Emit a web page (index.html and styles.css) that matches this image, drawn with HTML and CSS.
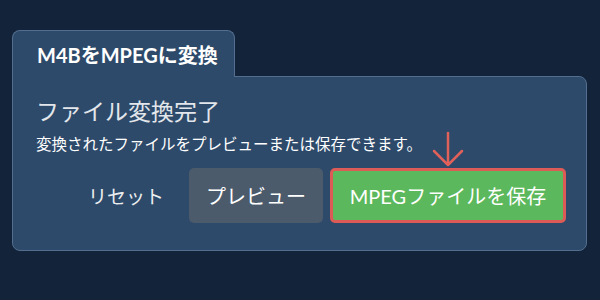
FILE: index.html
```html
<!DOCTYPE html>
<html lang="ja">

<head>
  <meta charset="UTF-8">
  <meta name="viewport" content="width=device-width, initial-scale=1.0">
  <title>M4BをMPEGに変換</title>
  <link rel="stylesheet" href="styles.css">
</head>

<body>
  <div class="widget">
    <div class="tab">M4BをMPEGに変換</div>
    <div class="panel">
      <h2 class="title">ファイル変換完了</h2>
      <p class="desc">変換されたファイルをプレビューまたは保存できます。</p>
      <div class="actions">
        <button class="btn btn-reset">リセット</button>
        <button class="btn btn-preview">プレビュー</button>
        <div class="save-wrap">
          <svg class="arrow" width="32" height="36" viewBox="0 0 32 36">
            <path d="M16 2 V34 M2 20 L16 34 L30 20" fill="none" stroke="#e0605a" stroke-width="2.5" stroke-linecap="round" stroke-linejoin="round"/>
          </svg>
          <button class="btn btn-save">MPEGファイルを保存</button>
        </div>
      </div>
    </div>
  </div>
</body>

</html>
```

FILE: styles.css
```css
body {
  margin: 0;
  background-color: #12233a;
  font-family: Lato, "Noto Sans CJK JP", sans-serif;
  color: #fff;
}

.widget {
  padding: 30px 13px 0 12px;
}

.tab {
  display: inline-block;
  width: 223px;
  box-sizing: border-box;
  height: 47px;
  padding: 9px 0 0 24px;
  background-color: #2d4a6a;
  border: 1px solid #536e8e;
  border-bottom: none;
  border-radius: 8px 8px 0 0;
  font-size: 20px;
  font-weight: bold;
  position: relative;
  z-index: 1;
  margin-bottom: -1px;
}

.panel {
  background-color: #2d4a6a;
  border: 1px solid #536e8e;
  border-radius: 0 8px 8px 8px;
  padding: 18px 20px 20px 23px;
  height: 135px;
}

.title {
  margin: 0;
  font-size: 23px;
  font-weight: normal;
  color: #e3e6ea;
  line-height: 32px;
}

.desc {
  margin: 7px 0 0;
  font-size: 15.5px;
  line-height: 20px;
  color: #fff;
}

.actions {
  display: flex;
  justify-content: flex-end;
  align-items: center;
  gap: 7px;
  margin-top: 14px;
}

.btn {
  font-family: Lato, "Noto Sans CJK JP", sans-serif;
  font-size: 20px;
  color: #fff;
  border: none;
  border-radius: 5px;
  height: 55px;
  padding: 0;
  cursor: pointer;
}

.btn-reset {
  background: none;
  font-size: 19px;
  padding: 0 18px 0 24px;
  color: #ecedef;
}

.btn-preview {
  background-color: #4b5b6c;
  width: 134px;
}

.save-wrap {
  position: relative;
}

.arrow {
  position: absolute;
  left: 102px;
  top: -37px;
}

.btn-save {
  background-color: #5cb85c;
  border: 3px solid #dc5b57;
  width: 236px;
  display: block;
}
```
